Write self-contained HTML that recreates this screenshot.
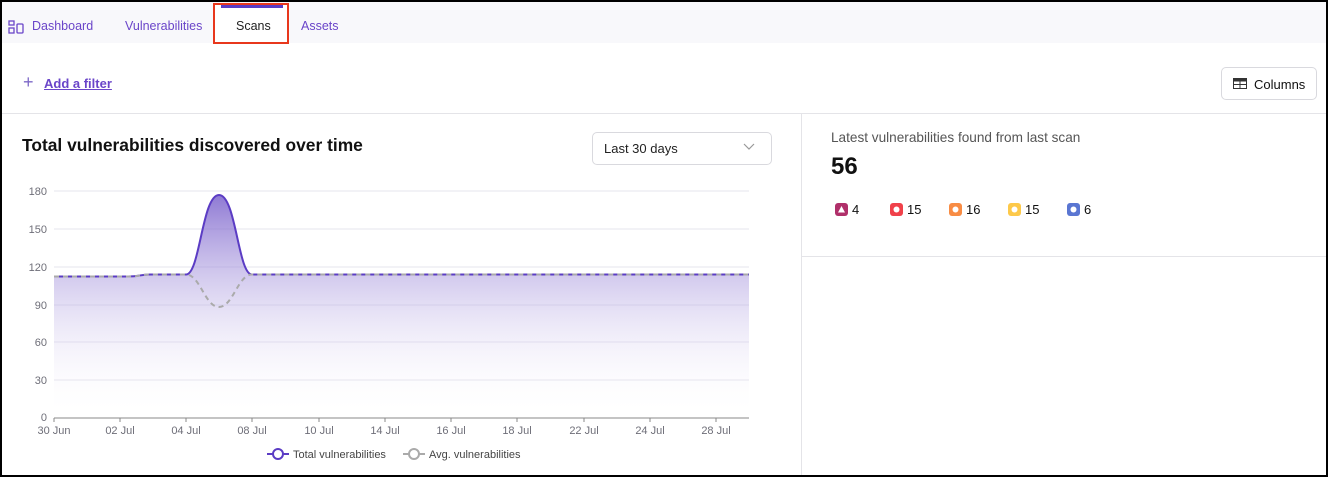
<!DOCTYPE html>
<html><head><meta charset="utf-8"><style>
*{box-sizing:border-box;margin:0;padding:0}
body{width:1328px;height:477px;overflow:hidden;background:#fff;font-family:"Liberation Sans",sans-serif;position:relative}
.frame{position:absolute;left:0;top:0;width:1328px;height:477px;border-left:2px solid #000;border-top:2px solid #000;border-right:2px solid #000;border-bottom:2px solid #000;pointer-events:none;z-index:10}
.tabs{position:absolute;left:0;top:0;width:1328px;height:43px;background:#f8f8fb}
.tab{position:absolute;top:19px;font-size:12.5px;color:#6a45c9}
.a{position:absolute}
</style></head><body>
<div class="tabs"></div>
<svg class="a" style="left:8px;top:20px" width="17" height="14" viewBox="0 0 17 14"><g fill="none" stroke="#6a45c9" stroke-width="1.3"><rect x="1" y="1" width="5" height="4"/><rect x="1" y="8" width="5" height="5"/><rect x="9" y="4" width="6" height="9" rx="1"/></g></svg>
<div class="tab" style="left:32px">Dashboard</div>
<div class="tab" style="left:125px">Vulnerabilities</div>
<div class="a" style="left:213px;top:3px;width:76px;height:41px;border:2px solid #e8371c;background:#fff"></div>
<div class="a" style="left:221px;top:5px;width:62px;height:3px;background:#5b3cc4"></div>
<div class="tab" style="left:236px;color:#222">Scans</div>
<div class="tab" style="left:301px">Assets</div>
<div class="a" style="left:23px;top:72px;font-size:18px;color:#7d68c7;font-weight:300">+</div>
<div class="a" style="left:44px;top:76px;font-size:13px;color:#6a45c9;text-decoration:underline;font-weight:bold">Add a filter</div>
<div class="a" style="left:1221px;top:67px;width:96px;height:33px;border:1px solid #d9d9de;border-radius:5px"></div>
<svg class="a" style="left:1233px;top:78px" width="14" height="11" viewBox="0 0 14 11"><rect x="0.5" y="0.5" width="13" height="10" fill="none" stroke="#333"/><rect x="0.5" y="0.5" width="13" height="3" fill="#333"/><line x1="7" y1="3" x2="7" y2="10" stroke="#333"/><line x1="1" y1="6.5" x2="13" y2="6.5" stroke="#333"/></svg>
<div class="a" style="left:1254px;top:77px;font-size:13px;color:#111">Columns</div>
<div class="a" style="left:0;top:113px;width:1328px;height:1px;background:#e4e4e8"></div>
<div class="a" style="left:801px;top:113px;width:1px;height:364px;background:#e4e4e8"></div>
<div class="a" style="left:802px;top:256px;width:526px;height:1px;background:#e4e4e8"></div>
<div class="a" style="left:22px;top:135px;font-size:17.4px;font-weight:bold;color:#111">Total vulnerabilities discovered over time</div>
<div class="a" style="left:592px;top:132px;width:180px;height:33px;border:1px solid #d9d9de;border-radius:5px"></div>
<div class="a" style="left:604px;top:141px;font-size:13px;color:#222">Last 30 days</div>
<svg class="a" style="left:743px;top:143px" width="12" height="8"><path d="M1 1 L6 6 L11 1" fill="none" stroke="#999" stroke-width="1.2"/></svg>
<div class="a" style="left:831px;top:130px;font-size:13.6px;color:#555">Latest vulnerabilities found from last scan</div>
<div class="a" style="left:831px;top:153px;font-size:24px;font-weight:bold;color:#111">56</div>
<svg class="a" style="left:834px;top:202px" width="270" height="16">
<rect x="1" y="1" width="13" height="13" rx="3" fill="#b0306a"/><path d="M7.5 4 L11 10.5 L4 10.5Z" fill="#fff"/>
<rect x="56" y="1" width="13" height="13" rx="3" fill="#f0414a"/><circle cx="62.5" cy="7.5" r="3" fill="#fff"/>
<rect x="115" y="1" width="13" height="13" rx="3" fill="#f88c44"/><circle cx="121.5" cy="7.5" r="3" fill="#fff"/>
<rect x="174" y="1" width="13" height="13" rx="3" fill="#fdc94a"/><circle cx="180.5" cy="7.5" r="3" fill="#fff"/>
<rect x="233" y="1" width="13" height="13" rx="3" fill="#5a76d2"/><circle cx="239.5" cy="7.5" r="3" fill="#fff"/>
<g font-family="Liberation Sans" font-size="13" fill="#111"><text x="18" y="12">4</text><text x="73" y="12">15</text><text x="132" y="12">16</text><text x="191" y="12">15</text><text x="250" y="12">6</text></g>
</svg>
<svg class="a" style="left:0;top:170px" width="800" height="300">
<defs><linearGradient id="g" x1="0" y1="0" x2="0" y2="1"><stop offset="0" stop-color="#7b62cc" stop-opacity=".85"/><stop offset=".4" stop-color="#a796dd" stop-opacity=".45"/><stop offset="1" stop-color="#fff" stop-opacity="0"/></linearGradient></defs>
<g stroke="#e6e6ee" stroke-width="1"><line x1="54" y1="21" x2="749" y2="21"/><line x1="54" y1="59" x2="749" y2="59"/><line x1="54" y1="97" x2="749" y2="97"/><line x1="54" y1="135" x2="749" y2="135"/><line x1="54" y1="172" x2="749" y2="172"/><line x1="54" y1="210" x2="749" y2="210"/></g>
<path d="M54 106.5 L128 106.5 C140 106.5 140 104.5 150 104.5 L186 104.5 C200 104.5 202 25 219 25 C236 25 238 104.5 252 104.5 L749 104.5 L749 247 L54 247Z" fill="url(#g)"/>
<path d="M54 106.5 L128 106.5 C140 106.5 140 104.5 150 104.5 L186 104.5 C200 104.5 202 25 219 25 C236 25 238 104.5 252 104.5 L749 104.5" fill="none" stroke="#5b3cc4" stroke-width="2"/>
<path d="M54 106.5 L128 106.5 C140 106.5 140 104.5 150 104.5 L186 104.5 C200 104.5 205 137 219 137 C233 137 238 104.5 252 104.5 L749 104.5" fill="none" stroke="#aaa" stroke-width="2" stroke-dasharray="5 4"/>
<line x1="54" y1="248" x2="749" y2="248" stroke="#888"/>
<g stroke="#888"><line x1="54" y1="248" x2="54" y2="252"/><line x1="120" y1="248" x2="120" y2="252"/><line x1="186" y1="248" x2="186" y2="252"/><line x1="252" y1="248" x2="252" y2="252"/><line x1="319" y1="248" x2="319" y2="252"/><line x1="385" y1="248" x2="385" y2="252"/><line x1="451" y1="248" x2="451" y2="252"/><line x1="517" y1="248" x2="517" y2="252"/><line x1="584" y1="248" x2="584" y2="252"/><line x1="650" y1="248" x2="650" y2="252"/><line x1="716" y1="248" x2="716" y2="252"/></g>
<g font-family="Liberation Sans" font-size="11" fill="#6e6e78" text-anchor="end"><text x="47" y="25">180</text><text x="47" y="63">150</text><text x="47" y="101">120</text><text x="47" y="139">90</text><text x="47" y="176">60</text><text x="47" y="214">30</text><text x="47" y="251">0</text></g>
<g font-family="Liberation Sans" font-size="11" fill="#6e6e78" text-anchor="middle"><text x="54" y="264">30 Jun</text><text x="120" y="264">02 Jul</text><text x="186" y="264">04 Jul</text><text x="252" y="264">08 Jul</text><text x="319" y="264">10 Jul</text><text x="385" y="264">14 Jul</text><text x="451" y="264">16 Jul</text><text x="517" y="264">18 Jul</text><text x="584" y="264">22 Jul</text><text x="650" y="264">24 Jul</text><text x="716" y="264">28 Jul</text></g>
<line x1="267" y1="284" x2="289" y2="284" stroke="#5b3cc4" stroke-width="2"/><circle cx="278" cy="284" r="5" fill="#fff" stroke="#5b3cc4" stroke-width="2"/>
<text x="293" y="288" font-family="Liberation Sans" font-size="11" fill="#444">Total vulnerabilities</text>
<line x1="403" y1="284" x2="425" y2="284" stroke="#aaa" stroke-width="2"/><circle cx="414" cy="284" r="5" fill="#fff" stroke="#aaa" stroke-width="2"/>
<text x="429" y="288" font-family="Liberation Sans" font-size="11" fill="#444">Avg. vulnerabilities</text>
</svg>
<div class="frame"></div>
</body></html>
